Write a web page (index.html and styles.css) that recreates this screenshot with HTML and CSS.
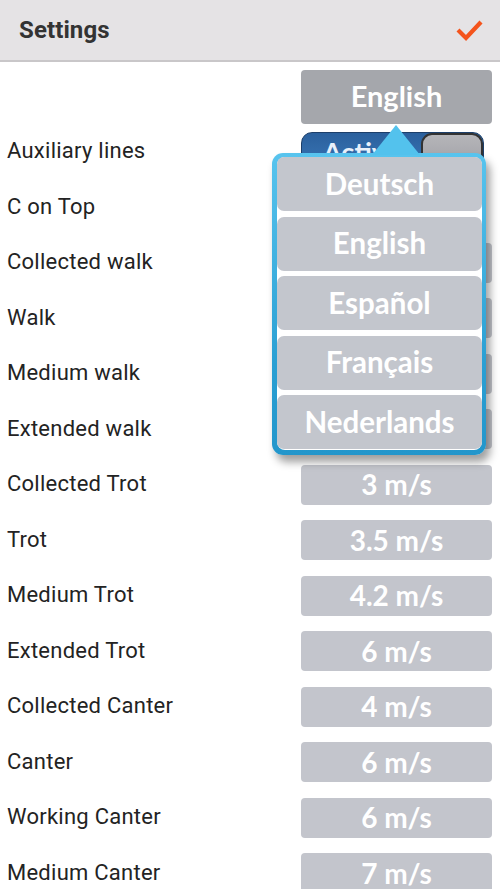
FILE: index.html
```html
<!DOCTYPE html>
<html lang="en">
<head>
<meta charset="utf-8">
<title>Settings</title>
<link rel="stylesheet" href="styles.css">
</head>
<body>
<header class="topbar">
  <h1 class="title">Settings</h1>
  <svg class="check" width="30" height="26" viewBox="0 0 30 26" aria-label="Done">
    <polyline points="3,12 11,20 26,4" fill="none" stroke="#f4541c" stroke-width="4.2" stroke-linecap="butt" stroke-linejoin="miter"/>
  </svg>
</header>
<main class="content">
  <div class="lang-row">
    <div class="lang-btn">English</div>
  </div>
  <ul class="rows">
    <li class="row"><span class="label">Auxiliary lines</span>
      <div class="toggle"><span class="toggle-text">Active</span><span class="knob"></span></div></li>
    <li class="row"><span class="label">C on Top</span>
      <div class="toggle"><span class="knob"></span></div></li>
    <li class="row"><span class="label">Collected walk</span><div class="value"></div></li>
    <li class="row"><span class="label">Walk</span><div class="value"></div></li>
    <li class="row"><span class="label">Medium walk</span><div class="value"></div></li>
    <li class="row"><span class="label">Extended walk</span><div class="value"></div></li>
    <li class="row"><span class="label">Collected Trot</span><div class="value">3 m/s</div></li>
    <li class="row"><span class="label">Trot</span><div class="value">3.5 m/s</div></li>
    <li class="row"><span class="label">Medium Trot</span><div class="value">4.2 m/s</div></li>
    <li class="row"><span class="label">Extended Trot</span><div class="value">6 m/s</div></li>
    <li class="row"><span class="label">Collected Canter</span><div class="value">4 m/s</div></li>
    <li class="row"><span class="label">Canter</span><div class="value">6 m/s</div></li>
    <li class="row"><span class="label">Working Canter</span><div class="value">6 m/s</div></li>
    <li class="row"><span class="label">Medium Canter</span><div class="value">7 m/s</div></li>
  </ul>

  <div class="popup">
    <span class="popup-arrow"></span>
    <div class="popup-inner">
      <div class="option">Deutsch</div>
      <div class="option">English</div>
      <div class="option">Español</div>
      <div class="option">Français</div>
      <div class="option">Nederlands</div>
    </div>
  </div>
</main>
</body>
</html>
```
FILE: styles.css
```css
html, body {
  margin: 0;
  padding: 0;
  background: #ffffff;
}
body {
  width: 500px;
  height: 889px;
  overflow: hidden;
  font-family: Roboto, "Liberation Sans", sans-serif;
}

.topbar {
  box-sizing: border-box;
  height: 62px;
  background: #e5e3e5;
  border-bottom: 2px solid #c9c7c9;
  display: flex;
  align-items: center;
  justify-content: space-between;
  padding: 0 15px 0 19px;
}
.title {
  margin: 0;
  font-family: Roboto, "Liberation Sans", sans-serif;
  font-weight: 700;
  font-size: 24px;
  color: #333333;
  letter-spacing: 0.1px;
}
.check {
  display: block;
  margin-top: 2px;
}

.content {
  position: relative;
}

.lang-row {
  height: 62px;
  display: flex;
  justify-content: flex-end;
  align-items: flex-end;
  padding-right: 8px;
}
.lang-btn {
  width: 191px;
  height: 54px;
  box-sizing: border-box;
  padding-bottom: 3px;
  background: #a5a7ac;
  border-radius: 4px;
  color: #ffffff;
  font-family: Lato, "Open Sans", sans-serif;
  font-weight: 700;
  font-size: 29px;
  display: flex;
  align-items: center;
  justify-content: center;
}

.rows {
  list-style: none;
  margin: 0;
  padding: 0;
}
.row {
  height: 55.5px;
  display: flex;
  align-items: center;
  justify-content: space-between;
  padding: 0 8px 0 7px;
}
.label {
  font-size: 22px;
  letter-spacing: 0.25px;
  color: #232323;
  margin-top: -2px;
}
.value {
  width: 191px;
  height: 40px;
  box-sizing: border-box;
  padding-bottom: 1px;
  background: #c3c5cc;
  border-radius: 4px;
  color: #ffffff;
  font-family: Lato, "Open Sans", sans-serif;
  font-weight: 700;
  font-size: 28px;
  display: flex;
  align-items: center;
  justify-content: center;
}

.toggle {
  width: 183px;
  height: 40px;
  margin-right: 8px;
  box-sizing: border-box;
  border-radius: 11px;
  background: linear-gradient(#2b609d, #3a78b8);
  border: 1px solid #1d3f6a;
  display: flex;
  align-items: center;
  justify-content: flex-end;
  overflow: hidden;
}
.toggle-text {
  flex: 1;
  text-align: center;
  color: #e8f0fa;
  font-family: Lato, "Open Sans", sans-serif;
  font-weight: 700;
  font-size: 27px;
}
.knob {
  width: 62px;
  height: 100%;
  box-sizing: border-box;
  background: linear-gradient(#b5b5b9, #a0a0a5);
  border: 2px solid #333;
  border-radius: 11px;
}

.popup {
  position: absolute;
  left: 272px;
  top: 91px;
  width: 214px;
  height: 302px;
  box-sizing: border-box;
  padding: 4px 4px 5px 5px;
  border-radius: 11px;
  background: linear-gradient(#58c4ee, #2a9fd3 70%, #2396cb);
  box-shadow: 4px 7px 9px rgba(0, 0, 0, 0.38);
}
.popup-arrow {
  position: absolute;
  left: 100px;
  top: -28px;
  width: 0;
  height: 0;
  border-left: 24px solid transparent;
  border-right: 24px solid transparent;
  border-bottom: 30px solid #53c2ed;
}
.popup-inner {
  height: 100%;
  box-sizing: border-box;
  background: #ffffff;
  border-radius: 8px;
  display: flex;
  flex-direction: column;
  gap: 5.5px;
}
.option {
  height: 54px;
  box-sizing: border-box;
  padding-bottom: 2px;
  background: #c3c6cd;
  border-radius: 7px;
  color: #ffffff;
  font-family: Lato, "Open Sans", sans-serif;
  font-weight: 700;
  font-size: 29.5px;
  display: flex;
  align-items: center;
  justify-content: center;
}
```
